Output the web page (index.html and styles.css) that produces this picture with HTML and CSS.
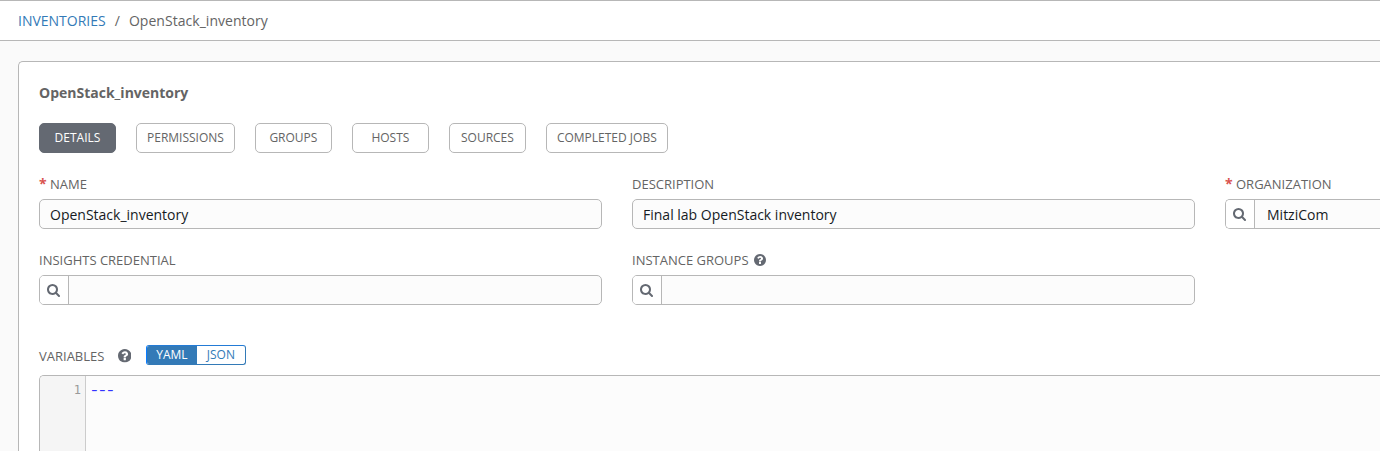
FILE: index.html
```html
<!DOCTYPE html>
<html lang="en">
<head>
<meta charset="utf-8">
<title>OpenStack_inventory</title>
<link rel="stylesheet" href="styles.css">
</head>
<body>
<svg class="defs" width="0" height="0">
  <symbol id="search" viewBox="0 128 1664 1664"><path d="M1152 832q0-185-131.500-316.500t-316.500-131.500-316.500 131.500-131.500 316.500 131.500 316.500 316.500 131.500 316.500-131.500 131.500-316.500zm512 832q0 52-38 90t-90 38q-54 0-90-38l-343-342q-179 124-399 124-143 0-273.500-55.500t-225-150-150-225-55.500-273.500 55.500-273.500 150-225 225-150 273.500-55.500 273.500 55.500 225 150 150 225 55.500 273.500q0 220-124 399l343 343q37 37 37 90z"/></symbol>
  <symbol id="help" viewBox="128 128 1536 1536"><path d="M1024 1376v-192q0-14-9-23t-23-9h-192q-14 0-23 9t-9 23v192q0 14 9 23t23 9h192q14 0 23-9t9-23zm256-672q0-88-55.500-163t-138.500-116-170-41q-243 0-371 213-15 24 8 42l132 100q7 6 19 6 16 0 25-12 53-68 86-92 34-24 86-24 48 0 85.500 26t37.500 59q0 38-20 61t-68 45q-63 28-115.500 86.500t-52.500 125.500v36q0 14 9 23t23 9h192q14 0 23-9t9-23q0-19 21.500-49.500t54.500-49.500q32-18 49-28.500t46-35 44.500-48 28-60.500 12.500-81zm384 192q0 209-103 385.500t-279.500 279.500-385.500 103-385.500-103-279.500-279.500-103-385.500 103-385.500 279.500-279.500 385.500-103 385.500 103 279.500 279.500 103 385.500z"/></symbol>
</svg>
<header class="breadcrumb"><a class="crumb-link">INVENTORIES</a><span class="crumb-sep">/</span><span class="crumb-name">OpenStack_inventory</span></header>
<main class="panel">
  <h1 class="title">OpenStack_inventory</h1>
  <nav class="tabs">
    <button class="tab active">DETAILS</button>
    <button class="tab">PERMISSIONS</button>
    <button class="tab">GROUPS</button>
    <button class="tab">HOSTS</button>
    <button class="tab">SOURCES</button>
    <button class="tab">COMPLETED JOBS</button>
  </nav>
  <form class="fields">
    <div class="field">
      <label class="label"><span class="required">*</span>NAME</label>
      <div class="control"><div class="value">OpenStack_inventory</div></div>
    </div>
    <div class="field">
      <label class="label">DESCRIPTION</label>
      <div class="control"><div class="value">Final lab OpenStack inventory</div></div>
    </div>
    <div class="field">
      <label class="label"><span class="required">*</span>ORGANIZATION</label>
      <div class="control open-end"><span class="lookup"><svg class="search-icon"><use href="#search"/></svg></span><div class="value lookup-value">MitziCom</div></div>
    </div>
    <div class="field">
      <label class="label">INSIGHTS CREDENTIAL</label>
      <div class="control"><span class="lookup"><svg class="search-icon"><use href="#search"/></svg></span><div class="value"></div></div>
    </div>
    <div class="field">
      <label class="label">INSTANCE GROUPS<svg class="help-icon"><use href="#help"/></svg></label>
      <div class="control"><span class="lookup"><svg class="search-icon"><use href="#search"/></svg></span><div class="value"></div></div>
    </div>
  </form>
  <div class="variables-head">
    <span class="variables-label">VARIABLES</span>
    <svg class="help-icon large"><use href="#help"/></svg>
    <div class="toggle"><span class="option selected">YAML</span><span class="option">JSON</span></div>
  </div>
  <div class="editor"><div class="gutter">1</div><div class="code">---</div></div>
</main>
</body>
</html>
```
FILE: styles.css
```css
* { box-sizing: border-box; }
body {
  display: flex;
  flex-direction: column;
  margin: 0;
  height: 451px;
  overflow: hidden;
  background: #fafafa;
  color: #646464;
  font: 14px/20px "Open Sans", sans-serif;
}
.defs { display: block; }
svg { fill: #646972; flex: none; }
.breadcrumb {
  display: flex;
  flex: none;
  height: 41px;
  padding: 10px 18px 0;
  background: #fff;
  border-top: 1px solid #b7b7b7;
  border-bottom: 1px solid #b7b7b7;
}
.crumb-link { color: #337ab7; }
.crumb-sep { margin: 0 9px; }
.crumb-name { letter-spacing: 0.04px; }
.panel {
  display: flex;
  flex: 1;
  flex-direction: column;
  min-height: 0;
  margin: 20px 0 0 18px;
  padding: 20px 0 0 20px;
  overflow: hidden;
  background: #fff;
  border: 1px solid #b7b7b7;
  border-width: 1px 0 0 1px;
  border-radius: 5px 0 0 0;
}
.title { margin: 0; font-size: 14px; line-height: 22px; font-weight: 700; }
.tabs { display: flex; gap: 20px; margin-top: 19px; }
.tab {
  height: 30px;
  min-width: 77px;
  padding: 0 10px;
  border: 1px solid #b7b7b7;
  border-radius: 5px;
  background: #fff;
  color: #646464;
  font: 12px/28px "Open Sans", sans-serif;
}
.tab.active { background: #646972; border-color: #646972; color: #fff; }
.fields {
  display: grid;
  grid-template-columns: 563px 563px 1fr;
  column-gap: 30px;
  row-gap: 21px;
  margin-top: 21px;
}
.label {
  display: flex;
  align-items: center;
  height: 20px;
  margin-bottom: 5px;
  font-size: 13px;
}
.required {
  width: 7px;
  margin-right: 4px;
  color: #d9534f;
  font-size: 14px;
  font-weight: 700;
  line-height: 20px;
}
.control {
  display: flex;
  height: 30px;
  overflow: hidden;
  border: 1px solid #b7b7b7;
  border-radius: 5px;
  background: #fcfcfc;
}
.open-end { border-right: 0; border-radius: 5px 0 0 5px; }
.value { flex: 1; padding: 0 10px; color: #161b1f; line-height: 30px; }
.lookup-value { padding-left: 12px; }
.lookup {
  display: flex;
  align-items: center;
  width: 29px;
  padding-left: 7px;
  border-right: 1px solid #b7b7b7;
  background: #fff;
}
.search-icon { width: 13px; height: 13px; }
.help-icon { width: 12px; height: 12px; margin-left: 5px; }
.variables-head { display: flex; flex: none; margin-top: 40px; height: 30px; }
.variables-label { font-size: 13px; line-height: 22px; }
.help-icon.large { width: 13.5px; height: 13.5px; margin: 4px 14.5px 0 13.5px; }
.toggle {
  display: flex;
  height: 20px;
  overflow: hidden;
  border: 1px solid #337ab7;
  border-color: #237bd6 #337ab7 #337ab7 #0a7cff;
  border-radius: 3px;
  font-size: 12px;
  line-height: 17px;
  color: #337ab7;
}
.option { width: 48px; text-align: center; }
.option.selected { width: 50px; background: #337ab7; color: #fff; }
.editor {
  display: flex;
  flex: 1;
  overflow: hidden;
  border: 1px solid #b7b7b7;
  border-width: 1px 0 0 1px;
  border-radius: 5px 0 0 0;
  background: #fcfcfc;
  font: 12px/20px "DejaVu Sans Mono", monospace;
}
.gutter {
  width: 46px;
  padding: 4px 4px 0 0;
  border-right: 1px solid #ccc;
  background: #f5f5f5;
  color: #999;
  text-align: right;
}
.code {
  padding: 5px 0 0 2px;
  color: #33f;
  font-size: 13.333px;
  letter-spacing: -2.3px;
  transform: scaleX(1.4);
  transform-origin: left top;
}
```
